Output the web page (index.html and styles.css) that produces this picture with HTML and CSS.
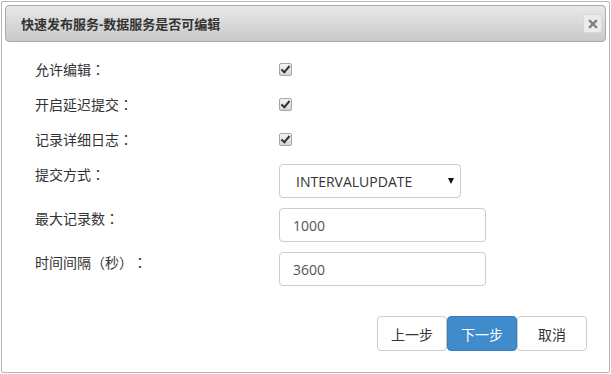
FILE: index.html
```html
<!DOCTYPE html>
<html>
<head>
  <meta charset="UTF-8">
  <meta name="viewport" content="width=device-width, initial-scale=1.0">
  <title>快速发布服务</title>
  <link rel="stylesheet" href="styles.css">
</head>
<body>
  <div class="dialog">
    <div class="titlebar">
      <span class="title">快速发布服务-数据服务是否可编辑</span>
      <button class="close" title="关闭">
        <svg width="10" height="10" viewBox="0 0 10 10">
          <path d="M2 2 L8 8 M8 2 L2 8" stroke="#808080" stroke-width="2.4" stroke-linecap="square"/>
        </svg>
      </button>
    </div>

    <form class="form">
      <div class="row row-check">
        <label class="label" for="allow-edit">允许编辑：</label>
        <input type="checkbox" id="allow-edit" class="check" checked>
      </div>
      <div class="row row-check">
        <label class="label" for="delay-commit">开启延迟提交：</label>
        <input type="checkbox" id="delay-commit" class="check" checked>
      </div>
      <div class="row row-check">
        <label class="label" for="detail-log">记录详细日志：</label>
        <input type="checkbox" id="detail-log" class="check" checked>
      </div>
      <div class="row">
        <label class="label" for="commit-mode">提交方式：</label>
        <div class="select-wrap">
          <select id="commit-mode" class="select">
            <option>INTERVALUPDATE</option>
          </select>
        </div>
      </div>
      <div class="row">
        <label class="label" for="max-records">最大记录数：</label>
        <input type="text" id="max-records" class="text" value="1000">
      </div>
      <div class="row">
        <label class="label" for="interval">时间间隔（秒）：</label>
        <input type="text" id="interval" class="text" value="3600">
      </div>
    </form>

    <div class="actions">
      <button class="btn">上一步</button>
      <button class="btn btn-primary">下一步</button>
      <button class="btn">取消</button>
    </div>
  </div>
</body>
</html>
```

FILE: styles.css
```css
body {
  margin: 0;
  background-color: #fff;
  font-family: "Liberation Sans", "Noto Sans CJK SC", sans-serif;
  color: #333;
  text-spacing-trim: space-all;
}
.dialog {
  box-sizing: border-box;
  width: 609px;
  height: 372px;
  margin: 1px 0 0 1px;
  padding: 3px;
  border: 1px solid #b4b4b4;
  border-radius: 2px;
}
.titlebar {
  box-sizing: border-box;
  height: 37px;
  display: flex;
  align-items: center;
  justify-content: space-between;
  padding: 0 3px 0 15px;
  border: 1px solid #aaa;
  border-radius: 4px;
  background: linear-gradient(#e8e8e8, #c9c9c9);
}
.title {
  font-size: 13px;
  font-weight: bold;
  color: #333;
}
.close {
  width: 19px;
  height: 19px;
  padding: 0;
  display: flex;
  align-items: center;
  justify-content: center;
  border: 1px solid #d8d8d8;
  border-radius: 3px;
  background: #ececec;
}
.form {
  padding: 10px 0 0 30px;
}
.row {
  display: flex;
  align-items: flex-start;
  margin-bottom: 10px;
}
.row-check {
  height: 35px;
  align-items: center;
  margin-bottom: 0;
}
.row-check:nth-child(3) {
  margin-bottom: 7px;
}
.label {
  width: 244px;
  font-family: "Liberation Sans", "Noto Sans CJK TC", sans-serif;
  font-size: 14px;
  line-height: 22px;
  color: #333;
}
.check {
  appearance: none;
  -webkit-appearance: none;
  position: relative;
  box-sizing: border-box;
  width: 13px;
  height: 13px;
  margin: 0;
  border: 1px solid #a6a6a6;
  border-radius: 2px;
  background: linear-gradient(#f4f4f4, #d6d6d6);
}
.check:checked::after {
  content: "";
  position: absolute;
  left: 3px;
  top: 0px;
  width: 3px;
  height: 7px;
  border: solid #333;
  border-width: 0 2px 2px 0;
  transform: rotate(40deg);
}
.select-wrap {
  position: relative;
}
.select-wrap::after {
  content: "";
  position: absolute;
  right: 7px;
  top: 14px;
  border-left: 3.5px solid transparent;
  border-right: 3.5px solid transparent;
  border-top: 6px solid #111;
}
.select {
  appearance: none;
  -webkit-appearance: none;
  box-sizing: border-box;
  width: 182px;
  height: 34px;
  padding: 0 0 0 16px;
  border: 1px solid #ccc;
  border-radius: 4px;
  background-color: #fff;
  font-family: "Open Sans", sans-serif;
  font-size: 14px;
  color: #333;
}
.text {
  box-sizing: border-box;
  width: 207px;
  height: 34px;
  padding: 0 13px;
  border: 1px solid #ccc;
  border-radius: 4px;
  font-family: "Open Sans", sans-serif;
  font-size: 14px;
  color: #555;
}
.actions {
  display: flex;
  justify-content: flex-end;
  padding: 20px 19px 0 0;
}
.btn {
  box-sizing: border-box;
  width: 70px;
  height: 35px;
  padding: 0;
  border: 1px solid #ccc;
  border-radius: 4px;
  background-color: #fff;
  font-family: inherit;
  font-size: 14px;
  color: #333;
  cursor: pointer;
}
.btn-primary {
  border-color: #357ebd;
  background-color: #3f8bcc;
  color: #fff;
}
```
